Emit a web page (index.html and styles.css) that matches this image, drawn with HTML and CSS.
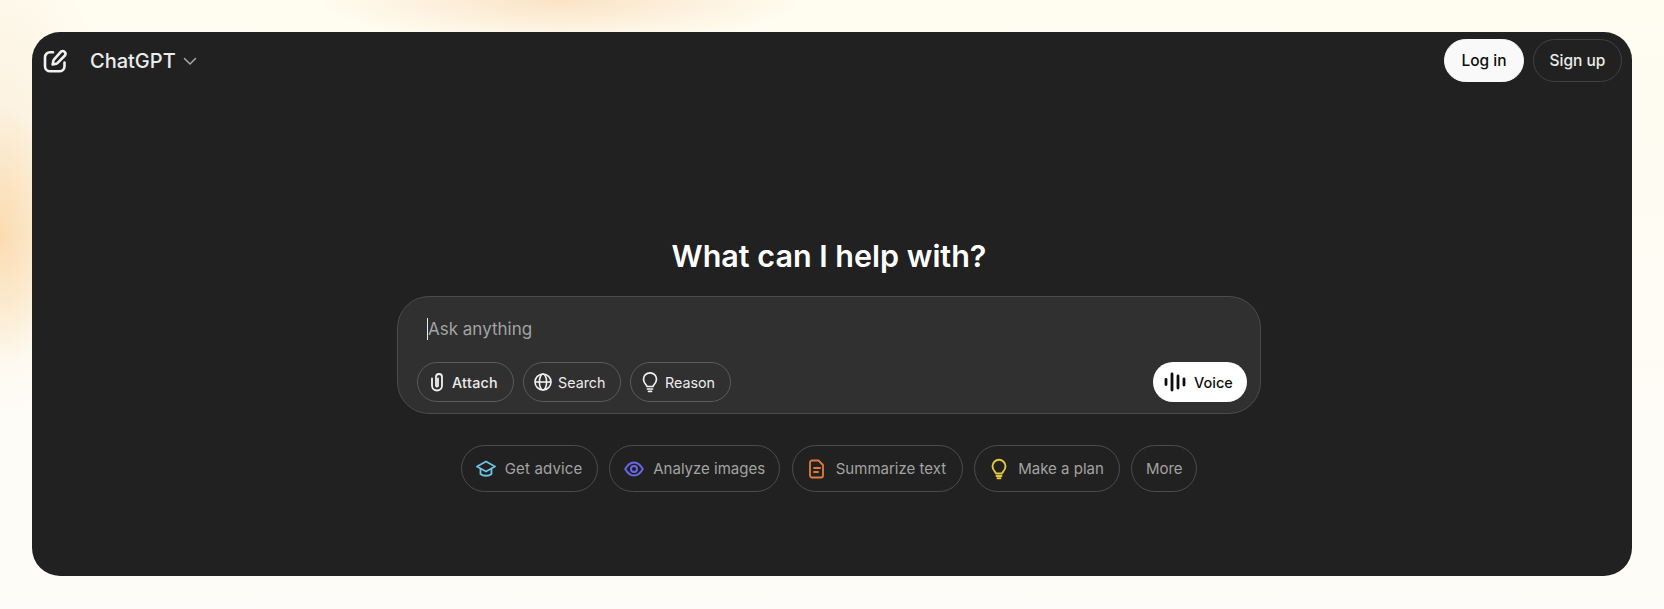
FILE: index.html
```html
<!DOCTYPE html>
<html lang="en">
<head>
  <meta charset="UTF-8">
  <title>ChatGPT</title>
  <link rel="stylesheet" href="styles.css">
</head>
<body>
  <div class="window">
    <header class="topbar">
      <div class="topbar-left">
        <svg class="new-chat" width="24" height="24" viewBox="0 0 24 24" fill="none" stroke="#f2f2f2" stroke-width="2.600" stroke-linecap="round" stroke-linejoin="round">
          <path d="M10 3.300H7a5 5 0 0 0-5 5v8.900a5 5 0 0 0 5 5h9.500a5 5 0 0 0 5-5v-3.700"/>
          <path d="M18 2.600a2.800 2.800 0 0 1 3.900 3.900l-7.500 7.600a2 2 0 0 1-1 .55l-3.800.8.8-3.800a2 2 0 0 1 .55-1z"/>
        </svg>
        <span class="brand">ChatGPT</span>
        <svg class="chevron" width="14" height="14" viewBox="0 0 14 14" fill="none" stroke="#a8a8a8" stroke-width="1.500" stroke-linecap="round" stroke-linejoin="round">
          <path d="M1.500 4.500 7 10l5.500-5.500"/>
        </svg>
      </div>
      <div class="topbar-right">
        <button class="btn btn-login">Log in</button>
        <button class="btn btn-signup">Sign up</button>
      </div>
    </header>

    <main class="content">
      <h1>What can I help with?</h1>

      <div class="composer">
        <div class="prompt"><span class="caret"></span>Ask anything</div>
        <div class="composer-row">
          <div class="tools">
            <button class="tool tool-attach">
              <svg width="20" height="22" viewBox="0 0 20 22" fill="none" stroke="#f2f2f2" stroke-width="1.800" stroke-linecap="round">
                <path d="M5 7.500v7a5 5 0 0 0 10 0V6a3 3 0 0 0-6 0v8.500a1 1 0 0 0 2 0V7.500"/>
              </svg>
              Attach
            </button>
            <button class="tool tool-search">
              <svg width="20" height="20" viewBox="0 0 20 20" fill="none" stroke="#f2f2f2" stroke-width="1.600">
                <circle cx="10" cy="10" r="8"/>
                <ellipse cx="10" cy="10" rx="3.600" ry="8"/>
                <path d="M2 10h16"/>
              </svg>
              Search
            </button>
            <button class="tool tool-reason">
              <svg width="20" height="22" viewBox="0 0 20 22" fill="none" stroke="#f2f2f2" stroke-width="1.700" stroke-linecap="round" stroke-linejoin="round">
                <path d="M7 15.500c0-1.700-3.500-3-3.500-7.200a6.500 6.500 0 0 1 13 0c0 4.200-3.500 5.500-3.500 7.200z"/>
                <path d="M7.500 18h5M8.500 20.300h3"/>
              </svg>
              Reason
            </button>
          </div>
          <button class="voice">
            <svg width="22" height="20" viewBox="0 0 22 20" fill="none" stroke="#0d0d0d" stroke-width="2.800" stroke-linecap="round">
              <path d="M2 7.500v5M8 2v16M14 4v12M20 7v6"/>
            </svg>
            Voice
          </button>
        </div>
      </div>

      <div class="suggestions">
        <button class="chip chip-advice">
          <svg width="20" height="20" viewBox="0 0 20 20" fill="none" stroke="#6cc4e4" stroke-width="1.800" stroke-linejoin="round" stroke-linecap="round">
            <path d="M10 2.500 1 7.500 10 12.500 19 7.500z"/>
            <path d="M4.500 10v5c2.800 2.300 8.200 2.300 11 0v-5"/>
          </svg>
          Get advice
        </button>
        <button class="chip chip-images">
          <svg width="20" height="20" viewBox="0 0 20 20" fill="none" stroke="#6a66e8" stroke-width="1.900">
            <path d="M1.200 10C4 5 7 3.500 10 3.500s6 1.500 8.800 6.500c-2.800 5-5.800 6.500-8.800 6.500s-6-1.500-8.800-6.500z"/>
            <circle cx="10" cy="10" r="3"/>
          </svg>
          Analyze images
        </button>
        <button class="chip chip-summary">
          <svg width="20" height="20" viewBox="0 0 20 20" fill="none" stroke="#e27a3c" stroke-width="1.800" stroke-linecap="round" stroke-linejoin="round">
            <path d="M5 1.500h6.500l4.500 4.500v10.500a2 2 0 0 1-2 2H5a2 2 0 0 1-2-2v-13a2 2 0 0 1 2-2z"/>
            <path d="M7 9h6M7 13h4"/>
          </svg>
          Summarize text
        </button>
        <button class="chip chip-plan">
          <svg width="20" height="22" viewBox="0 0 20 22" fill="none" stroke="#e2c541" stroke-width="1.900" stroke-linecap="round" stroke-linejoin="round">
            <path d="M7 15.500c0-1.700-3.500-3-3.500-7.200a6.500 6.500 0 0 1 13 0c0 4.200-3.500 5.500-3.500 7.200z"/>
            <path d="M7.500 18h5M8.500 20.300h3"/>
          </svg>
          Make a plan
        </button>
        <button class="chip chip-more">More</button>
      </div>
    </main>
  </div>
</body>
</html>
```

FILE: styles.css
```css
* { box-sizing: border-box; }

html, body { height: 100%; }

body {
  margin: 0;
  padding: 32px;
  overflow: hidden;
  font-family: "Inter", "Liberation Sans", sans-serif;
  background:
    radial-gradient(ellipse 70px 130px at 0 235px, #fbdcb0 0%, rgba(251, 220, 176, 0) 100%),
    radial-gradient(ellipse 110px 240px at 0 170px, #fbefdc 0%, rgba(251, 239, 220, 0) 100%),
    radial-gradient(ellipse 240px 44px at 560px 0, #fae3c6 0%, rgba(250, 227, 198, 0) 100%),
    linear-gradient(180deg, #fffcf0 0%, #fdfcf8 100%);
}

button {
  font-family: inherit;
  cursor: pointer;
}

.window {
  width: 1600px;
  height: 544px;
  background: #212121;
  border-radius: 28px;
  display: flex;
  flex-direction: column;
}

.topbar {
  display: flex;
  justify-content: space-between;
  align-items: center;
  padding: 7px 10px 0 11px;
}

.topbar-left {
  display: flex;
  align-items: center;
}

.new-chat { margin-right: 23px; }

.brand {
  font-size: 20px;
  font-weight: 500;
  color: #ececec;
  margin-right: 7px;
}

.topbar-right {
  display: flex;
  gap: 9px;
}

.btn {
  height: 43px;
  border-radius: 22px;
  font-size: 15.500px;
  font-weight: 500;
  padding: 0 10px;
}

.btn-login {
  width: 80px;
  background: #f9f9f9;
  color: #0d0d0d;
  border: 1px solid #f9f9f9;
}

.btn-signup {
  width: 89px;
  background: transparent;
  color: #ececec;
  border: 1px solid #424242;
}

.content {
  display: flex;
  flex-direction: column;
  align-items: center;
  padding: 156px 6px 0 0;
}

h1 {
  margin: 0 0 22px;
  font-size: 30.500px;
  line-height: 36px;
  font-weight: 600;
  color: #fff;
}

.composer {
  width: 864px;
  height: 118px;
  background: #303030;
  border: 1px solid #4c4c4c;
  border-radius: 32px;
  padding: 20px 14px 11px 19px;
  display: flex;
  flex-direction: column;
  justify-content: space-between;
}

.prompt {
  display: flex;
  align-items: center;
  height: 24px;
  padding-left: 10px;
  font-size: 17px;
  color: #a3a3a3;
}

.caret {
  width: 1px;
  height: 22px;
  background: #ececec;
}

.composer-row {
  display: flex;
  justify-content: space-between;
  align-items: center;
}

.tools {
  display: flex;
  gap: 9px;
}

.tool {
  height: 40px;
  display: flex;
  align-items: center;
  gap: 5px;
  background: transparent;
  border: 1px solid #5a5a5a;
  border-radius: 20px;
  color: #ececec;
  font-size: 14.300px;
  font-weight: 400;
  padding: 0 9px;
}

.tool-attach { width: 97px; font-weight: 500; letter-spacing: 0.3px; gap: 5px; }
.tool-search { width: 98px; }
.tool-reason { width: 101px; }

.voice {
  width: 94px;
  height: 40px;
  display: flex;
  align-items: center;
  gap: 8px;
  background: #fff;
  border: 0;
  border-radius: 20px;
  color: #0d0d0d;
  font-size: 14.500px;
  font-weight: 500;
  padding: 0 11px;
  margin-right: -1px;
}

.suggestions {
  display: flex;
  gap: 11.500px;
  margin-top: 31px;
}

.chip {
  height: 47px;
  display: flex;
  align-items: center;
  gap: 9px;
  background: transparent;
  border: 1px solid #4c4c4c;
  border-radius: 24px;
  color: #a3a3a3;
  font-size: 15px;
  padding: 0 14px;
}

.chip-advice { width: 137px; letter-spacing: 0.15px; }
.chip-images { width: 171px; }
.chip-summary { width: 171px; }
.chip-plan { width: 145.500px; }
.chip-more { width: 66px; justify-content: center; padding: 0; }
```
